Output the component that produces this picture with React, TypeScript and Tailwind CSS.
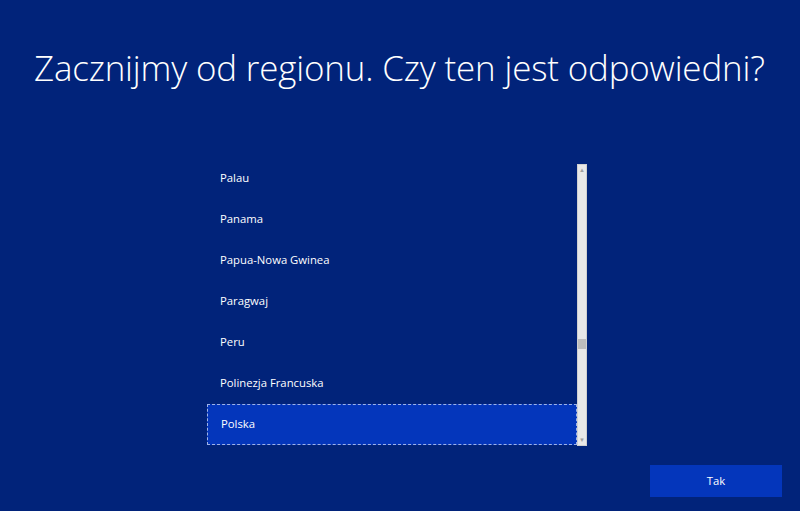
import React from "react";

const regions = [
  "Palau",
  "Panama",
  "Papua-Nowa Gwinea",
  "Paragwaj",
  "Peru",
  "Polinezja Francuska",
  "Polska",
];

const App: React.FC = () => {
  return (
    <div className="w-[800px] h-[511px] bg-[#01237a] text-white font-['Open_Sans',sans-serif] flex flex-col overflow-hidden">
      <h1 className="mt-[44px] ml-[34px] text-[34.9px] font-light leading-[48px] tracking-[-0.15px]">
        Zacznijmy od regionu. Czy ten jest odpowiedni?
      </h1>

      {/* region list */}
      <div className="mt-[72px] ml-[207px] flex h-[282px]">
        <div className="w-[370px] h-full overflow-hidden">
          <div className="-mt-[6px]">
            {regions.map((r) => (
              <div
                key={r}
                className={
                  r === "Polska"
                    ? "h-[41px] flex items-center pl-[13px] text-[11.3px] font-medium bg-[#0436bb] border border-dashed border-[#9fb3e8]"
                    : "h-[41px] flex items-center pl-[13px] text-[11.3px] font-medium"
                }
              >
                {r}
              </div>
            ))}
          </div>
        </div>
        <div className="w-[10px] h-full bg-[#e8e8e8] border border-[#d0d0d0] flex flex-col items-center justify-between py-[2px]">
          <span className="text-[6px] leading-[6px] text-[#a0a0a0]">▲</span>
          <div className="w-full flex-1 flex flex-col">
            <div className="h-[166px]" />
            <div className="h-[10px] bg-[#bdbdbd]" />
          </div>
          <span className="text-[6px] leading-[6px] text-[#a0a0a0]">▼</span>
        </div>
      </div>

      <div className="mt-[19px] ml-[650px]">
        <button className="w-[132px] h-[32px] bg-[#0436bb] text-[11.3px] font-medium text-white">
          Tak
        </button>
      </div>
    </div>
  );
};

export default App;
